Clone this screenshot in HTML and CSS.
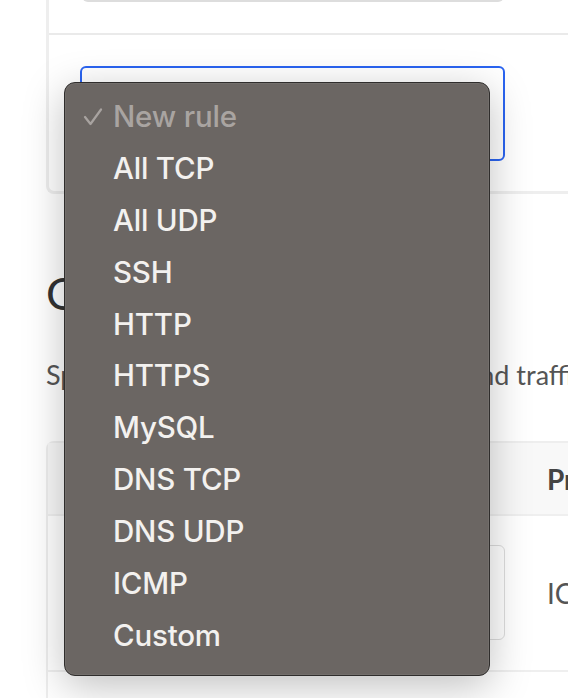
FILE: index.html
```html
<!DOCTYPE html>
<html lang="en">
<head>
<meta charset="utf-8">
<title>Rules</title>
<link rel="stylesheet" href="styles.css">
</head>
<body>
<div class="page">
  <div class="card">
    <div class="card-section top">
      <div class="field"></div>
    </div>
    <div class="card-section">
      <div class="select-box"></div>
    </div>
  </div>

  <h2 class="heading">Outbound rules</h2>
  <p class="subtitle">Specify the rules that control outbound traffic</p>

  <div class="table">
    <div class="row head">
      <div class="cell main"></div>
      <div class="cell side">Protocol</div>
    </div>
    <div class="row">
      <div class="cell main"><div class="field-box"></div></div>
      <div class="cell side">ICMP</div>
    </div>
    <div class="row last"></div>
  </div>
</div>

<div class="menu">
  <div class="item disabled">
    <svg class="check" width="20" height="18" viewBox="0 0 20 18"><polyline points="2,9 7.5,16 18,1.5" fill="none" stroke="#a8a3a0" stroke-width="2.2" stroke-linecap="round" stroke-linejoin="round"/></svg>
    New rule
  </div>
  <div class="item">All TCP</div>
  <div class="item">All UDP</div>
  <div class="item">SSH</div>
  <div class="item">HTTP</div>
  <div class="item">HTTPS</div>
  <div class="item">MySQL</div>
  <div class="item">DNS TCP</div>
  <div class="item">DNS UDP</div>
  <div class="item">ICMP</div>
  <div class="item">Custom</div>
</div>
</body>
</html>
```

FILE: styles.css
```css
html, body {
  margin: 0;
  padding: 0;
  background: #ffffff;
  overflow: hidden;
}
body {
  width: 568px;
  height: 698px;
  position: relative;
  font-family: Lato, "Open Sans", sans-serif;
}
.page {
  padding-left: 46px;
  overflow: hidden;
}
.card {
  margin-top: -44px;
  border: 3px solid #eeeeee;
  border-right: none;
  border-radius: 0 0 0 8px;
  margin-right: -20px;
}
.card-section {
  padding: 31px 0 30px 31px;
}
.card-section.top {
  padding: 0 0 31px 33px;
  border-bottom: 2px solid #eaeaea;
}
.field {
  width: 420px;
  height: 40px;
  border: 1px solid #dcdcdc;
  border-top: none;
  border-bottom: 3px solid #dddddd;
  border-radius: 0 0 6px 6px;
}
.select-box {
  width: 421px;
  height: 91px;
  border: 2px solid #2a64f1;
  border-radius: 6px;
}
.heading {
  margin: 72px 0 0 0;
  font-size: 45px;
  line-height: 54px;
  font-weight: 400;
  color: #333333;
}
.subtitle {
  margin: 37px 0 0 0;
  font-size: 27px;
  line-height: 36px;
  color: #555555;
  white-space: nowrap;
}
.table {
  margin-top: 48px;
  margin-right: -20px;
  border: 2px solid #eeeeee;
  border-right: none;
  border-radius: 8px 0 0 0;
}
.row {
  display: flex;
  border-bottom: 2px solid #efefef;
}
.row.head {
  height: 71px;
  background: #f8f8f8;
  align-items: center;
}
.row.head .side {
  font-weight: 700;
  color: #444444;
}
.row.last {
  height: 40px;
  border-bottom: none;
}
.cell.main {
  flex: 0 0 482px;
  width: 482px;
  padding: 29px 0 30px 32px;
  box-sizing: border-box;
}
.row.head .cell.main {
  padding: 0;
}
.cell.side {
  padding-left: 17px;
  font-size: 28px;
  color: #555555;
  white-space: nowrap;
  align-self: center;
}
.field-box {
  width: 423px;
  height: 93px;
  border: 1px solid #dddddd;
  border-radius: 6px;
}
.menu {
  position: absolute;
  left: 64px;
  top: 82px;
  width: 424px;
  height: 584px;
  background: #6b6663;
  border: 1px solid #2f2d2c;
  border-radius: 11px;
  box-shadow: 0 10px 40px rgba(0, 0, 0, 0.25), 0 0 0 1px rgba(255, 255, 255, 0.06) inset;
  padding-top: 8px;
  box-sizing: content-box;
  font-family: Inter, "Noto Sans", sans-serif;
}
.item {
  position: relative;
  height: 51.9px;
  line-height: 51.9px;
  padding-left: 48px;
  font-size: 29.5px;
  font-weight: 500;
  color: #f3f1ef;
  white-space: nowrap;
  letter-spacing: -0.2px;
}
.item.disabled {
  color: #a9a4a1;
}
.check {
  position: absolute;
  left: 18px;
  top: 17px;
}
```
